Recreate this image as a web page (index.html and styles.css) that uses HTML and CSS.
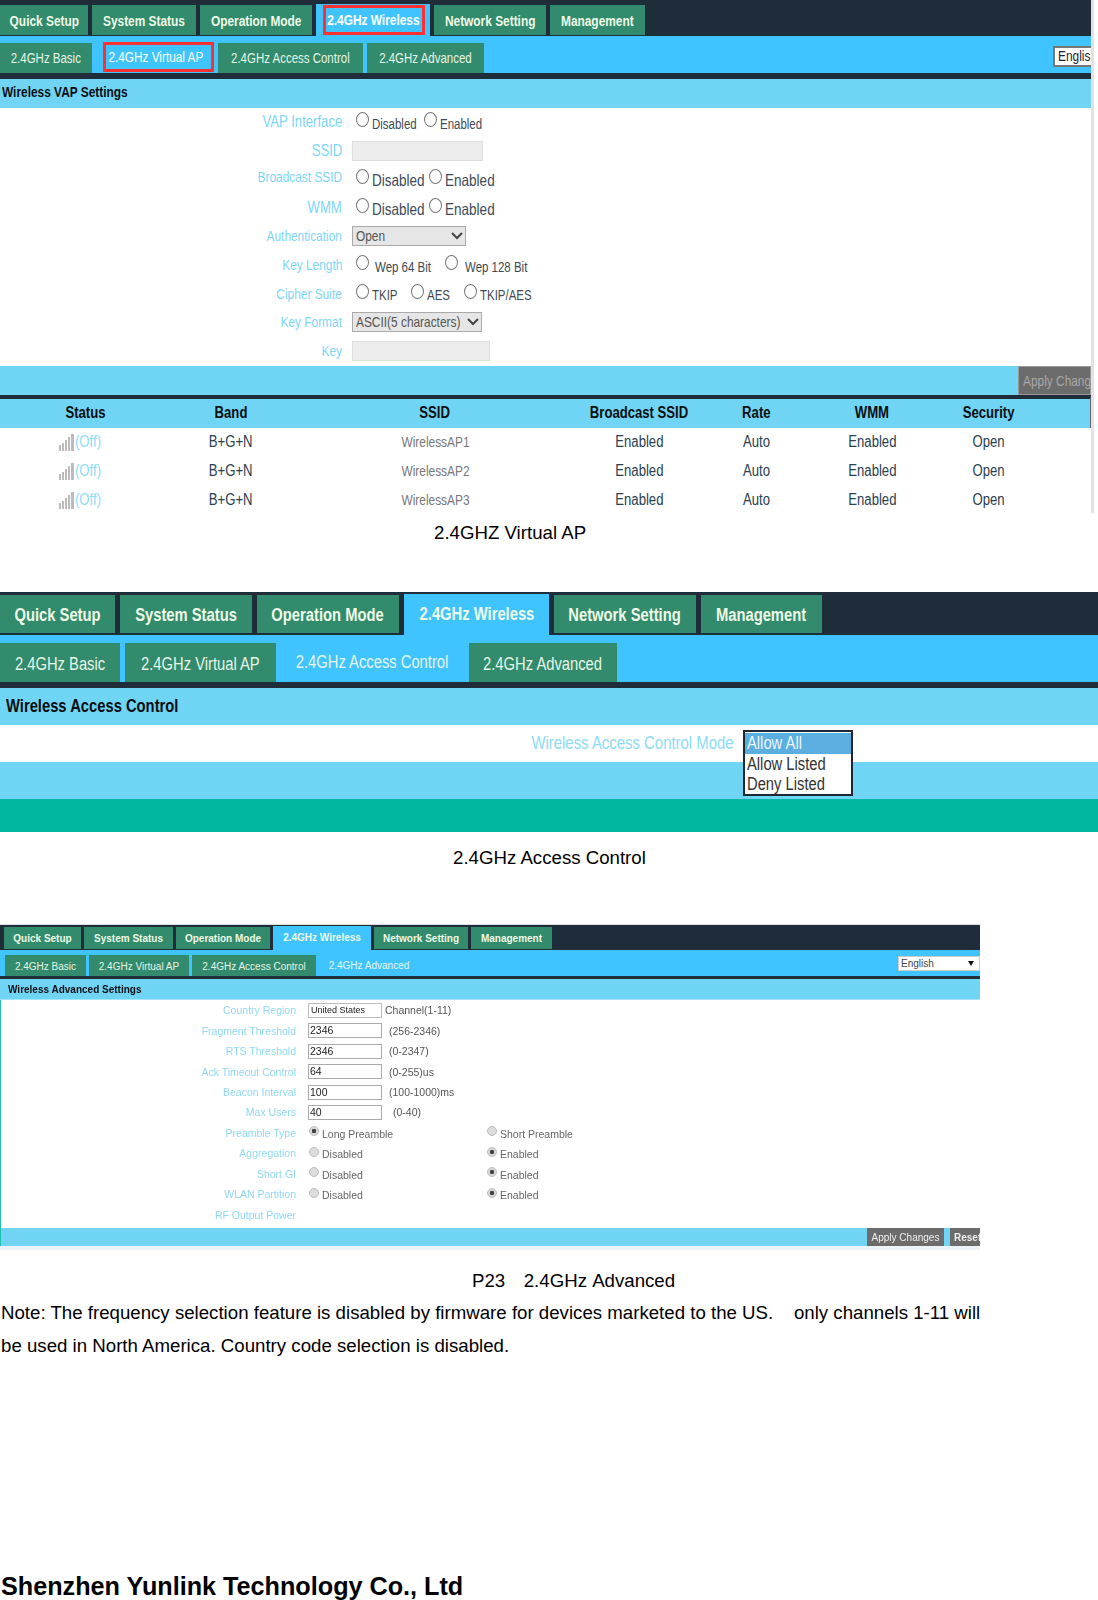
FILE: index.html
```html
<!DOCTYPE html>
<html lang="en">
<head>
<meta charset="utf-8">
<title>2.4GHz Wireless settings</title>
<link rel="stylesheet" href="styles.css">
</head>
<body>

<section class="shot one">
  <div class="top tabs">
    <div class="tab"><span class="sq">Quick Setup</span></div>
    <div class="tab"><span class="sq">System Status</span></div>
    <div class="tab"><span class="sq">Operation Mode</span></div>
    <div class="tab on"><span class="redbox"><span class="sq">2.4GHz Wireless</span></span></div>
    <div class="tab"><span class="sq">Network Setting</span></div>
    <div class="tab"><span class="sq">Management</span></div>
  </div>
  <div class="sub tabs">
    <div class="tab"><span class="sq">2.4GHz Basic</span></div>
    <div class="tab on"><span class="redbox"><span class="sq">2.4GHz Virtual AP</span></span></div>
    <div class="tab"><span class="sq">2.4GHz Access Control</span></div>
    <div class="tab"><span class="sq">2.4GHz Advanced</span></div>
    <div class="gapcell"></div>
    <div class="lang"><span class="sq sq-l">English</span></div>
  </div>
  <div class="bar head"><span class="sq sq-l">Wireless VAP Settings</span></div>
  <div class="form">
    <div class="row"><div class="lab l16"><span class="sq sq-r">VAP Interface</span></div><div class="ctl s14"><i class="radio"></i><span class="t w52">Disabled</span><i class="radio"></i><span class="t">Enabled</span></div></div>
    <div class="row"><div class="lab l16"><span class="sq sq-r">SSID</span></div><div class="ctl"><div class="field ssid"></div></div></div>
    <div class="row"><div class="lab l14 up"><span class="sq sq-r">Broadcast SSID</span></div><div class="ctl s16"><i class="radio"></i><span class="t w57">Disabled</span><i class="radio"></i><span class="t">Enabled</span></div></div>
    <div class="row"><div class="lab l16"><span class="sq sq-r">WMM</span></div><div class="ctl s16"><i class="radio"></i><span class="t w57">Disabled</span><i class="radio"></i><span class="t">Enabled</span></div></div>
    <div class="row"><div class="lab l14"><span class="sq sq-r">Authentication</span></div><div class="ctl"><div class="dd auth"><span class="ddtext"><span class="sq sq-l">Open</span></span><svg class="chev" viewBox="0 0 12 8"><path d="M1 1l5 5 5-5" fill="none" stroke="#444" stroke-width="2"/></svg></div></div></div>
    <div class="row"><div class="lab l14"><span class="sq sq-r">Key Length</span></div><div class="ctl s14"><i class="radio"></i><span class="t w70 far">Wep 64 Bit</span><i class="radio"></i><span class="t far2">Wep 128 Bit</span></div></div>
    <div class="row"><div class="lab l14"><span class="sq sq-r">Cipher Suite</span></div><div class="ctl s14"><i class="radio"></i><span class="t w39">TKIP</span><i class="radio"></i><span class="t w37">AES</span><i class="radio"></i><span class="t">TKIP/AES</span></div></div>
    <div class="row"><div class="lab l14"><span class="sq sq-r">Key Format</span></div><div class="ctl"><div class="dd fmt"><span class="ddtext"><span class="sq sq-l">ASCII(5 characters)</span></span><svg class="chev" viewBox="0 0 12 8"><path d="M1 1l5 5 5-5" fill="none" stroke="#444" stroke-width="2"/></svg></div></div></div>
    <div class="row"><div class="lab l14"><span class="sq sq-r">Key</span></div><div class="ctl"><div class="field key"></div></div></div>
  </div>
  <div class="bar apply"><div class="btn"><span class="sq sq-l">Apply Changes</span></div></div>
  <div class="thead">
    <div><span class="sq">Status</span></div><div><span class="sq">Band</span></div><div><span class="sq">SSID</span></div><div><span class="sq">Broadcast SSID</span></div><div><span class="sq">Rate</span></div><div><span class="sq">WMM</span></div><div><span class="sq">Security</span></div><div></div>
  </div>
  <div class="trow">
    <div class="off"><svg class="sig" viewBox="0 0 15 17"><path d="M0 11h2v6H0zM3 9h2v8H3zM6 6h2v11H6zM9 3h2v14H9zM12 0h3v17h-3z" fill="#bbb"/></svg><span class="sq sq-l">(Off)</span></div><div><span class="sq">B+G+N</span></div><div class="ap"><span class="sq">WirelessAP1</span></div><div><span class="sq">Enabled</span></div><div><span class="sq">Auto</span></div><div><span class="sq">Enabled</span></div><div><span class="sq">Open</span></div><div></div>
  </div>
  <div class="trow">
    <div class="off"><svg class="sig" viewBox="0 0 15 17"><path d="M0 11h2v6H0zM3 9h2v8H3zM6 6h2v11H6zM9 3h2v14H9zM12 0h3v17h-3z" fill="#bbb"/></svg><span class="sq sq-l">(Off)</span></div><div><span class="sq">B+G+N</span></div><div class="ap"><span class="sq">WirelessAP2</span></div><div><span class="sq">Enabled</span></div><div><span class="sq">Auto</span></div><div><span class="sq">Enabled</span></div><div><span class="sq">Open</span></div><div></div>
  </div>
  <div class="trow">
    <div class="off"><svg class="sig" viewBox="0 0 15 17"><path d="M0 11h2v6H0zM3 9h2v8H3zM6 6h2v11H6zM9 3h2v14H9zM12 0h3v17h-3z" fill="#bbb"/></svg><span class="sq sq-l">(Off)</span></div><div><span class="sq">B+G+N</span></div><div class="ap"><span class="sq">WirelessAP3</span></div><div><span class="sq">Enabled</span></div><div><span class="sq">Auto</span></div><div><span class="sq">Enabled</span></div><div><span class="sq">Open</span></div><div></div>
  </div>
</section>
<p class="cap c1">2.4GHZ Virtual AP</p>

<section class="shot two">
  <div class="top tabs">
    <div class="tab"><span class="sq">Quick Setup</span></div>
    <div class="tab"><span class="sq">System Status</span></div>
    <div class="tab"><span class="sq">Operation Mode</span></div>
    <div class="tab on"><span class="sq">2.4GHz Wireless</span></div>
    <div class="tab"><span class="sq">Network Setting</span></div>
    <div class="tab"><span class="sq">Management</span></div>
  </div>
  <div class="sub tabs">
    <div class="tab"><span class="sq">2.4GHz Basic</span></div>
    <div class="tab"><span class="sq">2.4GHz Virtual AP</span></div>
    <div class="tab on"><span class="sq">2.4GHz Access Control</span></div>
    <div class="tab"><span class="sq">2.4GHz Advanced</span></div>
  </div>
  <div class="bar head"><span class="sq sq-l">Wireless Access Control</span></div>
  <div class="moderow"><span class="modelab"><span class="sq sq-r">Wireless Access Control Mode</span></span></div>
  <div class="bar blank"></div>
  <div class="teal"></div>
  <div class="listbox">
    <div class="opt sel"><span class="sq sq-l">Allow All</span></div>
    <div class="opt"><span class="sq sq-l">Allow Listed</span></div>
    <div class="opt"><span class="sq sq-l">Deny Listed</span></div>
  </div>
</section>
<p class="cap c2">2.4GHz Access Control</p>

<section class="shot three">
  <div class="top tabs">
    <div class="tab">Quick Setup</div>
    <div class="tab">System Status</div>
    <div class="tab">Operation Mode</div>
    <div class="tab on">2.4GHz Wireless</div>
    <div class="tab">Network Setting</div>
    <div class="tab">Management</div>
  </div>
  <div class="sub tabs">
    <div class="tab">2.4GHz Basic</div>
    <div class="tab">2.4GHz Virtual AP</div>
    <div class="tab">2.4GHz Access Control</div>
    <div class="tab on">2.4GHz Advanced</div>
    <div class="gapcell"></div>
    <div class="lang">English<svg class="tri" viewBox="0 0 6 5"><path d="M0 0h6L3 5z" fill="#111"/></svg></div>
  </div>
  <div class="bar head">Wireless Advanced Settings</div>
  <div class="form">
    <div class="row"><div class="lab">Country Region</div><div class="ctl"><div class="box pick">United States</div><span class="hint h1">Channel(1-11)</span></div></div>
    <div class="row"><div class="lab">Fragment Threshold</div><div class="ctl"><div class="box">2346</div><span class="hint">(256-2346)</span></div></div>
    <div class="row"><div class="lab">RTS Threshold</div><div class="ctl"><div class="box">2346</div><span class="hint">(0-2347)</span></div></div>
    <div class="row"><div class="lab">Ack Timeout Control</div><div class="ctl"><div class="box">64</div><span class="hint">(0-255)us</span></div></div>
    <div class="row"><div class="lab">Beacon Interval</div><div class="ctl"><div class="box">100</div><span class="hint">(100-1000)ms</span></div></div>
    <div class="row"><div class="lab">Max Users</div><div class="ctl"><div class="box">40</div><span class="hint h2">(0-40)</span></div></div>
    <div class="row"><div class="lab">Preamble Type</div><div class="ctl"><div class="col"><i class="dot checked"></i><span class="t">Long Preamble</span></div><div class="col"><i class="dot"></i><span class="t">Short Preamble</span></div></div></div>
    <div class="row"><div class="lab">Aggregation</div><div class="ctl"><div class="col"><i class="dot"></i><span class="t">Disabled</span></div><div class="col"><i class="dot checked"></i><span class="t">Enabled</span></div></div></div>
    <div class="row"><div class="lab">Short GI</div><div class="ctl"><div class="col"><i class="dot"></i><span class="t">Disabled</span></div><div class="col"><i class="dot checked"></i><span class="t">Enabled</span></div></div></div>
    <div class="row"><div class="lab">WLAN Partition</div><div class="ctl"><div class="col"><i class="dot"></i><span class="t">Disabled</span></div><div class="col"><i class="dot checked"></i><span class="t">Enabled</span></div></div></div>
    <div class="row"><div class="lab">RF Output Power</div><div class="ctl"></div></div>
  </div>
  <div class="bar apply"><div class="btn">Apply Changes</div><div class="btn reset">Reset</div></div>
</section>
<p class="cap c3">P23&nbsp;&nbsp;&nbsp;2.4GHz Advanced</p>
<p class="note">Note: The frequency selection feature is disabled by firmware for devices marketed to the US. &nbsp;&nbsp; only channels 1-11 will be used in North America. Country code selection is disabled.</p>
<p class="foot">Shenzhen Yunlink Technology Co., Ltd</p>

</body>
</html>
```

FILE: styles.css
```css
* { box-sizing: border-box; }
html, body { margin: 0; padding: 0; background: #fff; }
body {
  font-family: "Liberation Sans", Arial, sans-serif;
  color: #000;
  height: 1600px;
  overflow: hidden;
}
i { display: block; }

/* the first two screenshots were squeezed horizontally */
.sq {
  display: inline-block;
  white-space: nowrap;
  transform: scaleX(0.82);
  transform-origin: center;
}
.sq-l { transform-origin: left center; }
.sq-r { transform-origin: right center; }

.shot { position: relative; overflow: hidden; }
.tabs { display: grid; background: #1f2d3a; }
.tab {
  background: #318b6c;
  display: flex;
  align-items: center;
  justify-content: center;
  white-space: nowrap;
}
.tab.on { background: #40c4ff; color: #fff; }
.top .tab { color: #eefae6; font-weight: bold; }
.sub { background: #40c4ff; }
.sub .tab { color: #e6f4e6; }
.bar { background: #70d4f4; }
.head { color: #0b0f12; font-weight: bold; display: flex; align-items: center; }
.lab { text-align: right; color: #7dd6f7; white-space: nowrap; }
.row { display: flex; align-items: center; }
.ctl { display: flex; align-items: center; }
.btn { background: #6c6c6c; display: flex; align-items: center; justify-content: center; white-space: nowrap; }

/* first screenshot */
.one { width: 1094px; height: 513px; border-right: 3px solid #e2e2e2; }
.one .top {
  height: 36px;
  padding-top: 5px;
  padding-bottom: 1px;
  gap: 4px;
  grid-template-columns: 88px 104px 112px 114px 112px 95px 1fr;
}
.one .top .tab { font-size: 14.5px; padding-top: 1px; }
.one .top .tab.on { margin: -1px 0; padding-top: 0; }
.redbox {
  border: 3px solid #ff3030;
  display: flex;
  align-items: center;
  justify-content: center;
  color: #fff;
}
.one .top .redbox { width: 102px; height: 30px; margin-left: 1px; }
.one .sub {
  height: 37px;
  padding-top: 7px;
  gap: 4px;
  grid-template-columns: 92px 118px 145px 117px 1fr 38px;
}
.one .sub .tab { font-size: 14px; }
.one .sub .tab.on { margin: -1px 0 1px; font-size: 14.4px; }
.one .sub .redbox { width: 111px; height: 30px; margin-left: 6px; padding: 0 4px 0 0; }
.gapcell { background: #40c4ff; }
.one .lang {
  width: 60px;
  height: 21px;
  margin-top: 3px;
  background: #fff;
  border: 2px solid #777;
  color: #223;
  font-size: 14.5px;
  padding: 0 0 0 3px;
  align-self: start;
}
.one .head {
  border-top: 6px solid #1f2d3a;
  height: 35px;
  padding: 0 0 3px 2px;
  font-size: 14.5px;
}
.one .form {
  display: grid;
  grid-template-rows: repeat(9, 1fr);
  height: 258px;
  padding-bottom: 1px;
}
.one .lab { width: 342px; margin-right: 10px; }
.one .up { margin-top: -4px; }
.l16 { font-size: 16px; }
.l14 { font-size: 14.5px; }
.s14, .s16 { padding-left: 4px; color: #3d4a55; }
.s14 { font-size: 14px; }
.s16 { font-size: 16.5px; }
.radio {
  width: 13px;
  height: 15px;
  border: 1px solid #777;
  border-radius: 50%;
  background: #fff;
  margin-top: -5px;
  flex: none;
}
.one .t {
  display: block;
  margin-left: 3px;
  margin-top: 3px;
  white-space: nowrap;
  transform: scaleX(0.82);
  transform-origin: left center;
}
.w52 { width: 52px; }
.w57 { width: 57px; }
.w39 { width: 39px; }
.w37 { width: 37px; }
.w70 { width: 70px; }
.one .far { margin-left: 6px; }
.one .far2 { margin-left: 7px; }
.field { height: 20px; background: #ededed; border: 1px solid #ddd; }
.ssid { width: 131px; }
.key { width: 138px; }
.dd {
  height: 20px;
  background: #e6e6e6;
  border: 1px solid #aaa;
  display: flex;
  align-items: center;
  padding: 0 2px 0 3px;
  font-size: 14.5px;
  color: #555;
}
.ddtext { flex: 1; min-width: 0; }
.auth { width: 114px; }
.fmt { width: 130px; }
.chev { width: 12px; height: 8px; flex: none; }
.one .apply { height: 29px; display: flex; justify-content: flex-end; }
.one .btn {
  width: 73px;
  border: 1px solid #999;
  color: #a7a7a7;
  font-size: 14.5px;
  justify-content: flex-start;
  padding-left: 4px;
  overflow: hidden;
}
.thead, .trow {
  display: grid;
  grid-template-columns: 170px 122px 286px 123px 110px 122px 112px 1fr;
  text-align: center;
}
.thead {
  border-top: 4px solid #1f2d3a;
  height: 33px;
  padding-bottom: 2px;
  background: #70d4f4;
  align-items: center;
  font-weight: bold;
  font-size: 16px;
  color: #0b0f12;
  border-right: 1px solid #667;
}
.trow { height: 29px; align-items: center; font-size: 16px; color: #29404f; padding-bottom: 1px; }
.trow .ap { font-size: 14.5px; color: #777; }
.off {
  display: flex;
  align-items: center;
  justify-content: center;
  color: #8ddcf6;
  padding-right: 4px;
}
.sig { width: 15px; height: 17px; margin-right: 1px; }

/* second screenshot */
.two { height: 240px; }
.two .top {
  height: 43px;
  padding-top: 3px;
  padding-bottom: 2px;
  gap: 5px;
  grid-template-columns: 115px 132px 142px 145px 142px 121px 1fr;
}
.two .top .tab { font-size: 18px; padding-top: 3px; }
.two .top .tab.on { margin: -1px 0 -2px; padding: 0 0 1px; }
.two .sub {
  height: 47px;
  padding-top: 8px;
  gap: 5px;
  grid-template-columns: 120px 151px 183px 148px;
}
.two .sub .tab { font-size: 18px; padding-top: 3px; }
.two .sub .tab.on { padding-top: 0; margin: 0 -5px; }
.two .head {
  border-top: 6px solid #1f2d3a;
  height: 43px;
  padding-left: 6px;
  font-size: 18px;
}
.moderow { height: 37px; display: flex; align-items: center; }
.modelab { width: 734px; text-align: right; color: #8ddcf6; font-size: 18.2px; white-space: nowrap; }
.blank { height: 37px; }
.teal { height: 33px; background: #00b8a0; }
.listbox {
  position: absolute;
  left: 743px;
  top: 138px;
  width: 110px;
  height: 66px;
  background: #fff;
  border: 2px solid #1f2730;
  padding: 1px 0;
  font-size: 18px;
  color: #333;
}
.opt { height: 20.7px; line-height: 20.7px; padding-left: 2px; }
.opt.sel { background: #5aaee0; color: #eef7ff; }

/* third screenshot */
.three {
  width: 980px;
  height: 326px;
  border-top: 1px solid #ddd;
  border-bottom: 4px solid #eef3f8;
  filter: blur(0.4px);
}
.three .top {
  height: 25px;
  padding-left: 4px;
  padding-top: 2px;
  padding-bottom: 1px;
  gap: 3px;
  grid-template-columns: 77px 89px 94px 98px 94px 81px 1fr;
}
.three .top .tab { font-size: 10px; padding-top: 1px; }
.three .top .tab.on { margin: -1px 0 -1px; padding: 0 0 2px; }
.three .sub {
  height: 26px;
  padding: 5px 0 0 5px;
  gap: 3px;
  grid-template-columns: 81px 100px 124px 100px 1fr 82px;
}
.three .sub .tab { font-size: 10px; padding-top: 1px; }
.three .sub .tab.on { padding: 0 0 1px; }
.three .lang {
  height: 15px;
  margin-top: 1px;
  background: #fff;
  border: 1px solid #ccc;
  color: #444;
  font-size: 10px;
  padding-left: 2px;
  display: flex;
  align-items: center;
  justify-content: space-between;
  padding-right: 5px;
  align-self: start;
}
.tri { width: 6px; height: 5px; }
.three .head {
  border-top: 3px solid #1f2d3a;
  height: 24px;
  padding: 1px 0 0 8px;
  font-size: 10px;
  border-bottom: 1px solid #a8e4f8;
}
.three .form {
  display: grid;
  grid-template-rows: repeat(11, 1fr);
  height: 228px;
  padding-bottom: 3px;
  border-left: 1px solid #1cbfb0;
}
.three .lab { width: 295px; margin-right: 12px; font-size: 10.5px; color: #8fd8f4; }
.box {
  width: 74px;
  height: 15px;
  border: 1px solid #aaa;
  font-size: 10.5px;
  color: #222;
  padding-left: 1px;
  line-height: 13px;
}
.pick { font-size: 9px; padding-left: 2px; border-color: #bbb; }
.hint { font-size: 10.5px; color: #555; margin-left: 7px; }
.h1 { margin-left: 3px; }
.h2 { margin-left: 11px; }
.col { width: 178px; display: flex; align-items: center; padding-left: 1px; }
.dot {
  width: 10px;
  height: 10px;
  border-radius: 50%;
  background: #ddd;
  border: 1px solid #bbb;
  margin-top: -3px;
}
.dot.checked { background: radial-gradient(circle, #444 0 2px, #d8d8d8 2.5px); }
.three .t { font-size: 10.5px; color: #666; margin-left: 3px; margin-top: 2px; }
.three .apply {
  height: 20px;
  display: flex;
  justify-content: flex-end;
  gap: 6px;
  border-left: 1px solid #1cbfb0;
  border-bottom: 1px solid #4fc5d6;
}
.three .btn { width: 77px; color: #eee; font-size: 10px; }
.three .reset { width: 30px; justify-content: flex-start; padding-left: 4px; overflow: hidden; font-weight: bold; }

/* captions and page text */
.cap { margin: 0; font-size: 18.67px; line-height: 40px; height: 40px; white-space: nowrap; }
.c1 { padding-left: 434px; margin-bottom: 39px; }
.c2 { padding-left: 453px; margin: 6px 0 46px; }
.c3 { padding-left: 472px; height: 33px; line-height: 33px; margin-top: 14px; word-spacing: 1px; }
.note { margin: -1px 0 0; width: 982px; padding-left: 1px; font-size: 18.67px; line-height: 33px; }
.foot { margin: 209px 0 0 1px; font-size: 25.2px; font-weight: bold; line-height: 30px; white-space: nowrap; }
```
